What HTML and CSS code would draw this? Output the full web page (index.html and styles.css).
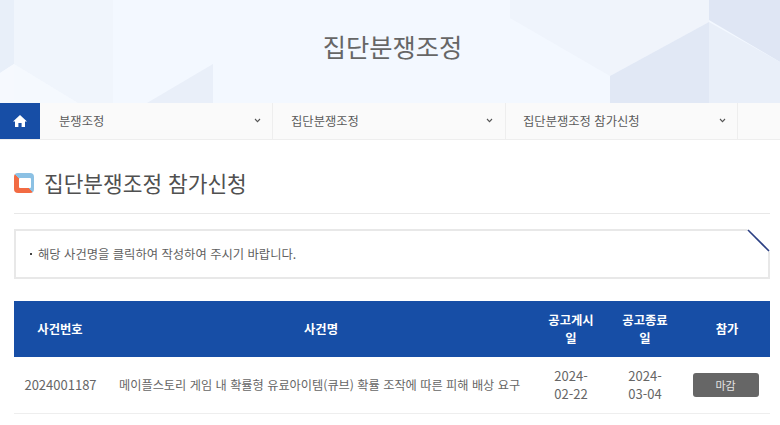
FILE: index.html
```html
<!DOCTYPE html>
<html lang="ko">
<head>
<meta charset="utf-8">
<title>집단분쟁조정 참가신청</title>
<link rel="stylesheet" href="styles.css">
</head>
<body>
<header class="banner">
  <svg class="banner-art" viewBox="0 0 780 103" preserveAspectRatio="none" aria-hidden="true">
    <polygon points="0,0 14,0 14,64 0,73" fill="#e8eff9"/>
    <polygon points="14,0 113,0 113,103 78,103 14,64" fill="#f0f5fc"/>
    <polygon points="14,64 78,103 14,103" fill="#f5f9fe"/>
    <polygon points="0,73 14,64 14,103 0,103" fill="#f6f9fe"/>
    <polygon points="147,103 213,64 213,103" fill="#e9eff9"/>
    <polygon points="510,0 610,0 610,76 510,18" fill="#eff4fc"/>
    <polygon points="610,0 709,0 709,22 610,76" fill="#f0f4fb"/>
    <polygon points="610,76 709,22 709,103 610,103" fill="#e1e8f5"/>
    <polygon points="709,0 780,0 780,62 709,20" fill="#dfe6f4"/>
    <polygon points="709,22 780,62 780,103 709,103" fill="#e9eff9"/>
  </svg>
  <h1 class="banner-title">집단분쟁조정</h1>
</header>
<nav class="crumbs">
  <a class="home" href="#" aria-label="홈">
    <svg width="16" height="14" viewBox="0 0 16 14"><path d="M8 1 L15 7.4 H13 V13 H9.6 V9 H6.4 V13 H3 V7.4 H1 Z" fill="#fff"/></svg>
  </a>
  <div class="crumb crumb-a"><span>분쟁조정</span><svg class="chev" width="7" height="5" viewBox="0 0 7 5"><path d="M1 1 L3.5 3.6 L6 1" fill="none" stroke="#555" stroke-width="1.1"/></svg></div>
  <div class="crumb crumb-b"><span>집단분쟁조정</span><svg class="chev" width="7" height="5" viewBox="0 0 7 5"><path d="M1 1 L3.5 3.6 L6 1" fill="none" stroke="#555" stroke-width="1.1"/></svg></div>
  <div class="crumb crumb-c"><span>집단분쟁조정 참가신청</span><svg class="chev" width="7" height="5" viewBox="0 0 7 5"><path d="M1 1 L3.5 3.6 L6 1" fill="none" stroke="#555" stroke-width="1.1"/></svg></div>
</nav>
<main class="content">
  <div class="page-head">
    <span class="head-icon"></span>
    <h2 class="page-title">집단분쟁조정 참가신청</h2>
  </div>
  <div class="notice">
    <p class="notice-text"><span class="dot"></span>해당 사건명을 클릭하여 작성하여 주시기 바랍니다.</p>
    <svg class="notice-corner" width="24" height="24" viewBox="0 0 24 24" aria-hidden="true"><polygon points="1,0 24,0 24,23" fill="#fff"/><path d="M2 1 L23 22" stroke="#2b3f83" stroke-width="1.6"/></svg>
  </div>
  <table class="cases">
    <colgroup>
      <col class="c1"><col class="c2"><col class="c3"><col class="c4"><col class="c5">
    </colgroup>
    <thead>
      <tr><th>사건번호</th><th>사건명</th><th>공고게시일</th><th>공고종료일</th><th>참가</th></tr>
    </thead>
    <tbody>
      <tr>
        <td class="td-num">2024001187</td>
        <td class="td-name">메이플스토리 게임 내 확률형 유료아이템(큐브) 확률 조작에 따른 피해 배상 요구</td>
        <td class="td-date">2024-02-22</td>
        <td class="td-date">2024-03-04</td>
        <td class="td-btn"><span class="closed">마감</span></td>
      </tr>
    </tbody>
  </table>
</main>
</body>
</html>
```
FILE: styles.css
```css
* { box-sizing: border-box; }
html, body { margin: 0; padding: 0; }
body {
  width: 780px;
  height: 425px;
  overflow: hidden;
  background: #fff;
  font-family: "Noto Sans CJK KR", "Noto Sans", sans-serif;
  color: #5a5a5a;
}
.banner {
  position: relative;
  height: 103px;
  background: #f3f8ff;
  display: flex;
  align-items: center;
  justify-content: center;
  padding-left: 5px;
}
.banner-art { position: absolute; inset: 0; width: 100%; height: 100%; }
.banner-title {
  position: relative;
  margin: 0 0 11px;
  font-size: 25.3px;
  font-weight: 400;
  color: #666;
  line-height: 36px;
}
.crumbs {
  display: flex;
  height: 37px;
  background: #fafafa;
  border-bottom: 1px solid #eee;
}
.home {
  width: 40px;
  height: 36px;
  background: #174ea6;
  display: flex;
  align-items: center;
  justify-content: center;
}
.crumb {
  display: flex;
  align-items: center;
  justify-content: space-between;
  border-right: 1px solid #eee;
  font-size: 12.3px;
  color: #5a5a5a;
  padding-bottom: 1px;
}
.crumb-a { width: 233px; padding-left: 19px; padding-right: 11px; }
.crumb-b { width: 233px; padding-left: 18px; padding-right: 12px; }
.crumb-c { width: 232px; padding-left: 17px; padding-right: 11px; }
.chev { flex: none; }
.content { padding: 0 10px 0 14px; }
.page-head {
  display: flex;
  align-items: center;
  gap: 10px;
  height: 74px;
  padding-top: 13px;
  border-bottom: 1px solid #e8e8e8;
}
.head-icon {
  width: 20px;
  height: 20px;
  border-radius: 4px;
  background: linear-gradient(45deg, #f26b43 0 50%, #8cc1e4 50% 100%);
  position: relative;
  display: block;
}
.head-icon::after {
  content: "";
  position: absolute;
  left: 5px; top: 5px; right: 3px; bottom: 5px;
  background: #fff;
  border-radius: 1px;
}
.page-title {
  margin: 0;
  font-size: 21.4px;
  font-weight: 400;
  color: #505050;
  line-height: 30px;
}
.notice {
  position: relative;
  margin-top: 15px;
  height: 50px;
  border: 2px solid #e8e8e8;
  display: flex;
  align-items: center;
  padding-left: 14px;
}
.notice-text {
  margin: 0;
  font-size: 12.3px;
  color: #5f5f5f;
  display: flex;
  align-items: center;
}
.dot {
  width: 2px;
  height: 2px;
  background: #444;
  margin-right: 6px;
}
.notice-corner { position: absolute; top: -2px; right: -2px; }
.cases {
  width: 756px;
  margin-top: 22px;
  border-collapse: collapse;
  table-layout: fixed;
  font-size: 12.3px;
}
.c1 { width: 92px; }
.c2 { width: 430px; }
.c3 { width: 70px; }
.c4 { width: 78px; }
.c5 { width: 86px; }
th {
  height: 56px;
  padding: 0 10px;
  background: #174ea6;
  color: #fff;
  font-weight: 700;
  text-align: center;
  line-height: 18px;
}
th:nth-child(4) { padding: 0 16px; }
td {
  height: 56px;
  padding: 0 8px;
  text-align: center;
  color: #666;
  line-height: 18px;
  border-bottom: 1px solid #eee;
}
.cases td.td-num { font-size: 13px; padding: 0 0 0 1px; }
.cases td.td-name { padding: 0 0 0 13px; text-align: left; white-space: nowrap; font-size: 12.2px; }
.cases td.td-date { font-size: 13px; padding: 0 15px; }
.cases td.td-btn { padding: 0 11px 0 8px; }
.closed {
  display: inline-block;
  width: 66px;
  height: 24px;
  line-height: 24px;
  background: #666;
  color: #e4e4e4;
  border-radius: 3px;
  font-size: 11px;
  vertical-align: middle;
}
```
